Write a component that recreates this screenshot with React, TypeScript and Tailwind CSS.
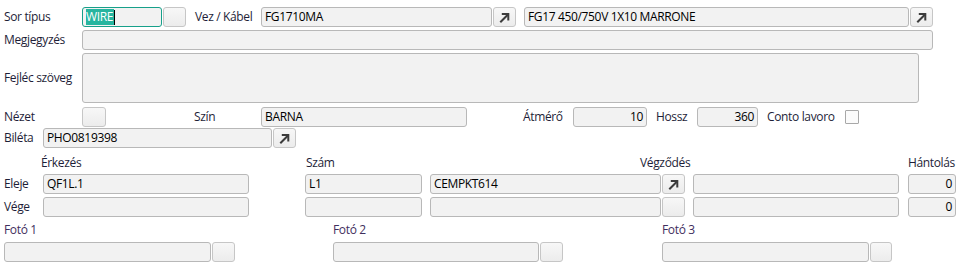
import React from "react";

function Arrow() {
  return (
    <svg width="11" height="11" viewBox="0 0 11 11" fill="none">
      <path d="M2 9.5 L8.8 2.7" stroke="#3c3c3c" strokeWidth="2" strokeLinecap="square" />
      <path d="M3.8 2 H9.3 V7.5" stroke="#3c3c3c" strokeWidth="2" strokeLinecap="square" />
    </svg>
  );
}

function Field({
  w,
  value = "",
  right = false,
  className = "",
}: {
  w: string;
  value?: string;
  right?: boolean;
  className?: string;
}) {
  return (
    <div
      className={`${w} h-[20px] shrink-0 flex items-center rounded-[3px] border border-[#b8b8b8] bg-[#f2f2f2] text-black text-[12px] leading-none overflow-hidden whitespace-nowrap ${
        right ? "justify-end pr-[3px]" : "pl-[3px]"
      } ${className}`}
    >
      {value}
    </div>
  );
}

function Btn({ w = "w-[23px]", arrow = false, className = "" }: { w?: string; arrow?: boolean; className?: string }) {
  return (
    <div
      className={`${w} h-[20px] shrink-0 flex items-center justify-center rounded-[3px] border border-[#c6c6c6] bg-gradient-to-b from-[#f7f7f7] to-[#ececec] ${className}`}
    >
      {arrow && <Arrow />}
    </div>
  );
}

function Label({ w, text, className = "" }: { w: string; text: string; className?: string }) {
  return <div className={`${w} shrink-0 text-[12px] leading-none text-[#1e1e38] whitespace-nowrap ${className}`}>{text}</div>;
}

export default function App() {
  return (
    <div
      className="w-[963px] h-[266px] bg-white pl-[4px] pt-[7px] flex flex-col tracking-[-0.35px]"
      style={{ fontFamily: '"Open Sans", "Noto Sans", sans-serif' }}
    >
      {/* Row 1 */}
      <div className="flex items-center h-[20px]">
        <Label w="w-[78px]" text="Sor típus" />
        <div className="w-[80px] h-[20px] shrink-0 flex items-center rounded-[3px] border border-[#17a08a] bg-[#f2f2f2] pl-[3px] text-[12px] leading-none">
          <span className="bg-[#27b59f] text-white pr-[1px] h-[16px] flex items-center">WIRE</span>
          <span className="w-[1px] h-[15px] bg-black"></span>
        </div>
        <Btn className="ml-[1px]" />
        <Label w="w-[66px]" text="Vez / Kábel" className="ml-[9px]" />
        <Field w="w-[231px]" value="FG1710MA" />
        <Btn className="ml-[1px]" arrow />
        <Field w="w-[385px]" value="FG17 450/750V 1X10 MARRONE" className="ml-[8px]" />
        <Btn className="ml-[1px]" arrow />
      </div>

      {/* Row 2 */}
      <div className="flex items-center h-[20px] mt-[3px]">
        <Label w="w-[78px]" text="Megjegyzés" />
        <Field w="w-[851px]" />
      </div>

      {/* Row 3 */}
      <div className="flex items-center h-[50px] mt-[3px]">
        <Label w="w-[78px]" text="Fejléc szöveg" />
        <div className="w-[837px] h-[50px] shrink-0 rounded-[3px] border border-[#b8b8b8] bg-[#f2f2f2]" />
      </div>

      {/* Row 4 */}
      <div className="flex items-center h-[20px] mt-[4px]">
        <Label w="w-[78px]" text="Nézet" />
        <Btn w="w-[24px]" />
        <Label w="w-[67px]" text="Szín" className="ml-[88px]" />
        <Field w="w-[206px]" value="BARNA" />
        <Label w="w-[50px]" text="Átmérő" className="ml-[56px]" />
        <Field w="w-[74px]" value="10" right />
        <Label w="w-[41px]" text="Hossz" className="ml-[9px]" />
        <Field w="w-[61px]" value="360" right />
        <Label w="w-[78px]" text="Conto lavoro" className="ml-[9px]" />
        <div className="w-[14px] h-[14px] shrink-0 border border-[#a8a8a8] bg-[#fbfbfb] rounded-[1px]" />
      </div>

      {/* Row 5 */}
      <div className="flex items-center h-[20px] mt-[1px]">
        <Label w="w-[39px]" text="Biléta" />
        <Field w="w-[229px]" value="PHO0819398" />
        <Btn className="ml-[1px]" arrow />
      </div>

      {/* Row 6 labels */}
      <div className="flex items-center h-[14px] mt-[8px] pl-[37px]">
        <Label w="w-[265px]" text="Érkezés" />
        <Label w="w-[334px]" text="Szám" />
        <Label w="w-[268px]" text="Végződés" />
        <Label w="w-[50px]" text="Hántolás" />
      </div>

      {/* Row 7 */}
      <div className="flex items-center h-[20px] mt-[4px]">
        <Label w="w-[39px]" text="Eleje" />
        <Field w="w-[206px]" value="QF1L.1" />
        <Field w="w-[117px]" value="L1" className="ml-[56px]" />
        <Field w="w-[231px]" value="CEMPKT614" className="ml-[8px]" />
        <Btn className="ml-[1px]" arrow />
        <Field w="w-[206px]" className="ml-[8px]" />
        <Field w="w-[48px]" value="0" right className="ml-[9px]" />
      </div>

      {/* Row 8 */}
      <div className="flex items-center h-[20px] mt-[3px]">
        <Label w="w-[39px]" text="Vége" />
        <Field w="w-[206px]" />
        <Field w="w-[117px]" className="ml-[56px]" />
        <Field w="w-[231px]" className="ml-[8px]" />
        <Btn className="ml-[1px]" />
        <Field w="w-[206px]" className="ml-[8px]" />
        <Field w="w-[48px]" value="0" right className="ml-[9px]" />
      </div>

      {/* Row 9 labels */}
      <div className="flex items-center h-[14px] mt-[6px]">
        <Label w="w-[329px]" text="Fotó 1" className="text-[#3f2f5e]" />
        <Label w="w-[329px]" text="Fotó 2" className="text-[#3f2f5e]" />
        <Label w="w-[60px]" text="Fotó 3" className="text-[#3f2f5e]" />
      </div>

      {/* Row 10 */}
      <div className="flex items-center h-[20px] mt-[5px]">
        <Field w="w-[207px]" />
        <Btn className="ml-[1px]" />
        <Field w="w-[206px]" className="ml-[98px]" />
        <Btn className="ml-[1px]" />
        <Field w="w-[207px]" className="ml-[99px]" />
        <Btn w="w-[22px]" className="ml-[1px]" />
      </div>
    </div>
  );
}
